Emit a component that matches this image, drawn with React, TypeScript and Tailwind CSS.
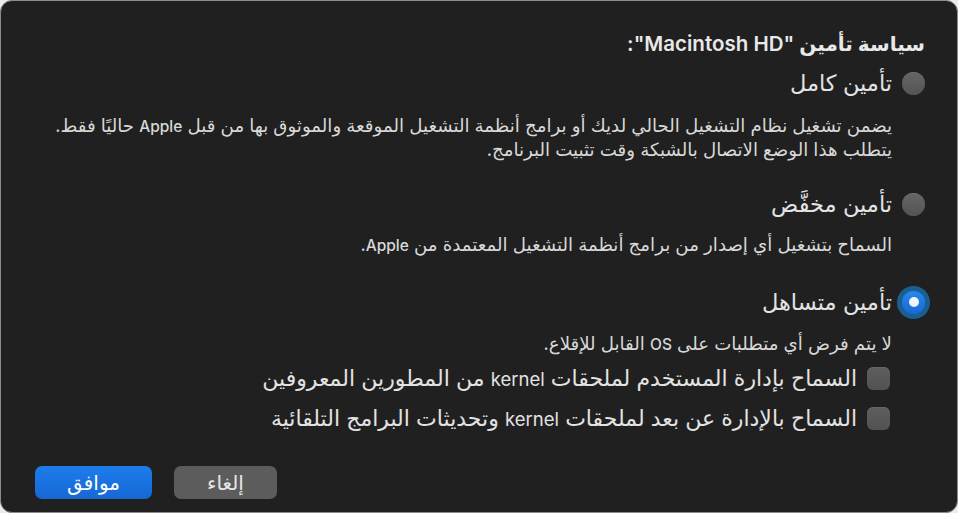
import React from 'react';

// ── Contrôles ───────────────────────────────────────────────────────────────

function Radio({ checked }: { checked?: boolean }) {
  if (checked) {
    return (
      <span className="relative flex h-[23px] w-[23px] shrink-0 items-center justify-center">
        <span className="absolute -inset-[5px] rounded-full bg-[#1b5f92]" />
        <span className="relative flex h-[23px] w-[23px] items-center justify-center rounded-full bg-gradient-to-b from-[#2a86ee] to-[#1669d6]">
          <span className="h-[10px] w-[10px] rounded-full bg-[#f2f4f8]" />
        </span>
      </span>
    );
  }
  return (
    <span className="h-[23px] w-[23px] shrink-0 rounded-full bg-gradient-to-b from-[#666666] to-[#545454] shadow-[inset_0_0.5px_0_rgba(255,255,255,0.15)]" />
  );
}

function Checkbox() {
  return (
    <span className="h-[23px] w-[23px] shrink-0 rounded-[6px] bg-gradient-to-b from-[#5e5e5e] to-[#525252] shadow-[inset_0_0.5px_0_rgba(255,255,255,0.12)]" />
  );
}

function Option({ label, checked }: { label: string; checked?: boolean }) {
  return (
    <div className="flex h-6 items-center gap-[10px]">
      <Radio checked={checked} />
      <span className="text-[22.5px] leading-6 text-[#e3e3e3]">{label}</span>
    </div>
  );
}

function Check({ children }: { children: React.ReactNode }) {
  return (
    <div className="flex h-6 items-center gap-[10px] pr-[35px]">
      <Checkbox />
      <span className="text-[22px] leading-6 text-[#e3e3e3]">{children}</span>
    </div>
  );
}

function Lat({ children, cls = 'text-[15.5px] font-medium' }: { children: React.ReactNode; cls?: string }) {
  return <span className={cls}>{children}</span>;
}

// ── Fenêtre ─────────────────────────────────────────────────────────────────

export default function App() {
  return (
    <div className="h-[513px] w-[958px] bg-[#ececec]">
      <div
        dir="rtl"
        className="flex h-[513px] w-[958px] flex-col rounded-[12px] border border-[#8c8c8c] bg-[#202020] pr-[32px] pl-[34px]"
        style={{ fontFamily: '"Inter", "DejaVu Sans", sans-serif' }}
      >
        <h1 className="mt-[31px] text-[20px] font-semibold leading-6 text-[#e8e8e8]">
          سياسة تأمين <Lat cls="text-[20.5px] font-semibold">"Macintosh HD":</Lat>
        </h1>

        <div className="mt-[15px]">
          <Option label="تأمين كامل" />
        </div>
        <p className="mt-[19px] pr-[33px] text-[18.2px] leading-[22px] text-[#d8d8d8]">
          يضمن تشغيل نظام التشغيل الحالي لديك أو برامج أنظمة التشغيل الموقعة والموثوق بها من قبل <Lat>Apple</Lat> حاليًا فقط.
          <br />
          يتطلب هذا الوضع الاتصال بالشبكة وقت تثبيت البرنامج.
        </p>

        <div className="mt-[32px]">
          <Option label="تأمين مخفَّض" />
        </div>
        <p className="mt-[17px] pr-[33px] text-[18.2px] leading-[22px] text-[#d8d8d8]">
          السماح بتشغيل أي إصدار من برامج أنظمة التشغيل المعتمدة من <Lat>Apple</Lat>.
        </p>

        <div className="mt-[33px]">
          <Option label="تأمين متساهل" checked />
        </div>
        <p className="mt-[18px] pr-[33px] text-[18.2px] leading-[22px] text-[#d8d8d8]">
          لا يتم فرض أي متطلبات على <Lat>OS</Lat> القابل للإقلاع.
        </p>

        <div className="mt-[10px]">
          <Check>
            السماح بإدارة المستخدم لملحقات <Lat cls="text-[18.5px]">kernel</Lat> من المطورين المعروفين
          </Check>
        </div>
        <div className="mt-[16px]">
          <Check>
            السماح بالإدارة عن بعد لملحقات <Lat cls="text-[18.5px]">kernel</Lat> وتحديثات البرامج التلقائية
          </Check>
        </div>

        <div className="mt-auto mb-[13px] flex items-center justify-end gap-[22px]">
          <button
            type="button"
            className="h-[33px] w-[103px] rounded-[7px] bg-[#5c5c5c] text-[20px] leading-none text-[#e6e6e6]"
          >
            إلغاء
          </button>
          <button
            type="button"
            className="h-[33px] w-[117px] rounded-[7px] bg-gradient-to-b from-[#1e7cec] to-[#1668d4] text-[20px] leading-none text-white"
          >
            موافق
          </button>
        </div>
      </div>
    </div>
  );
}
